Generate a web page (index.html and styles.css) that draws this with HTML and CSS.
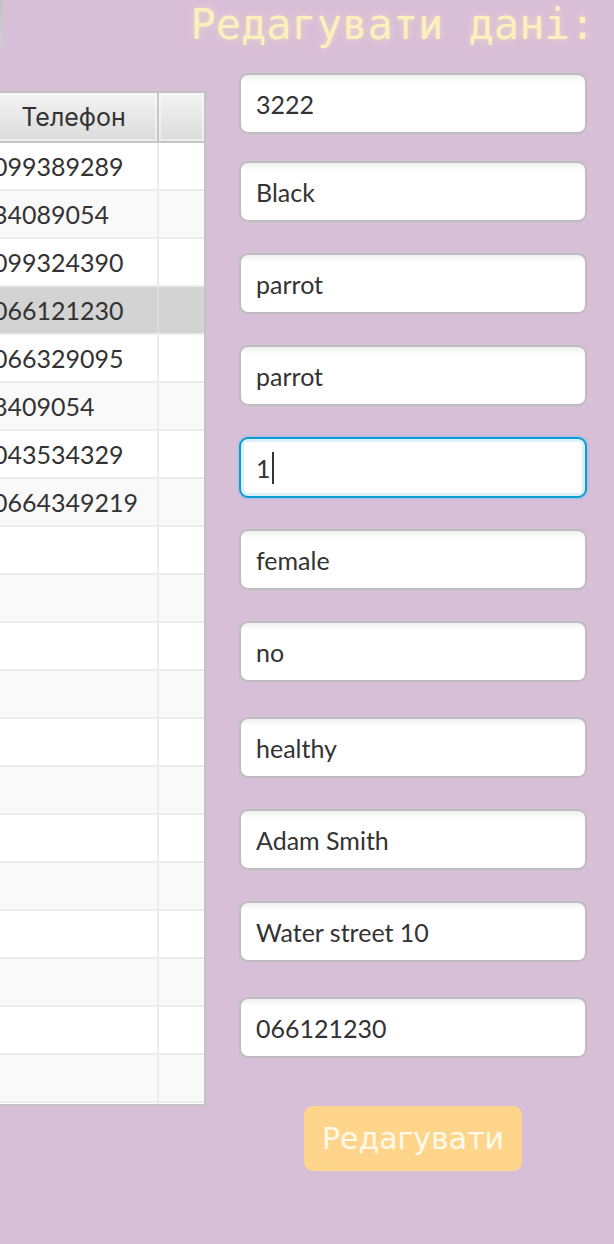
FILE: index.html
```html
<!DOCTYPE html>
<html lang="uk">
<head>
<meta charset="utf-8">
<title>Редагувати дані</title>
<link rel="stylesheet" href="styles.css">
</head>
<body>
<div class="page">
  <div class="topbar">
    <div class="stub"></div>
    <h1 class="title">Редагувати дані:</h1>
  </div>
  <div class="table">
    <div class="thead"><div class="th c1">Телефон</div><div class="th c2"></div></div>
    <div class="row"><div class="td c1">099389289</div><div class="td c2"></div></div>
    <div class="row alt"><div class="td c1">34089054</div><div class="td c2"></div></div>
    <div class="row"><div class="td c1">099324390</div><div class="td c2"></div></div>
    <div class="row sel"><div class="td c1">066121230</div><div class="td c2"></div></div>
    <div class="row"><div class="td c1">066329095</div><div class="td c2"></div></div>
    <div class="row alt"><div class="td c1">8409054</div><div class="td c2"></div></div>
    <div class="row"><div class="td c1">043534329</div><div class="td c2"></div></div>
    <div class="row alt"><div class="td c1">0664349219</div><div class="td c2"></div></div>
    <div class="row"><div class="td c1"></div><div class="td c2"></div></div>
    <div class="row alt"><div class="td c1"></div><div class="td c2"></div></div>
    <div class="row"><div class="td c1"></div><div class="td c2"></div></div>
    <div class="row alt"><div class="td c1"></div><div class="td c2"></div></div>
    <div class="row"><div class="td c1"></div><div class="td c2"></div></div>
    <div class="row alt"><div class="td c1"></div><div class="td c2"></div></div>
    <div class="row"><div class="td c1"></div><div class="td c2"></div></div>
    <div class="row alt"><div class="td c1"></div><div class="td c2"></div></div>
    <div class="row"><div class="td c1"></div><div class="td c2"></div></div>
    <div class="row alt"><div class="td c1"></div><div class="td c2"></div></div>
    <div class="row"><div class="td c1"></div><div class="td c2"></div></div>
    <div class="row alt"><div class="td c1"></div><div class="td c2"></div></div>
    <div class="row"><div class="td c1"></div><div class="td c2"></div></div>
  </div>
  <div class="form">
    <div class="field">3222</div>
    <div class="field tight">Black</div>
    <div class="field">parrot</div>
    <div class="field">parrot</div>
    <div class="field focused">1<span class="caret"></span></div>
    <div class="field">female</div>
    <div class="field">no</div>
    <div class="field loose">healthy</div>
    <div class="field">Adam Smith</div>
    <div class="field">Water street 10</div>
    <div class="field loose">066121230</div>
    <button class="btn" type="button">Редагувати</button>
  </div>
</div>
</body>
</html>
```
FILE: styles.css
```css
html, body {
  margin: 0;
  padding: 0;
}
body {
  background: #d8bfd8;
  width: 614px;
  height: 1244px;
  overflow: hidden;
  font-family: "Lato", "Inter", "Liberation Sans", sans-serif;
  color: #333333;
}
.page {
  display: grid;
  grid-template-columns: 206px 348px;
  column-gap: 33px;
  align-items: start;
}
.topbar {
  grid-column: 1 / span 2;
  margin-right: -27px;
  height: 60px;
  display: flex;
  justify-content: space-between;
  align-items: flex-start;
}
.stub {
  width: 3px;
  height: 46px;
  background: linear-gradient(#c4c4c4, #d0cdd0);
}
.title {
  margin: 0;
  padding-right: 19px;
  font-family: "DejaVu Sans Mono", monospace;
  font-weight: normal;
  font-size: 42px;
  line-height: 49px;
  color: #ffefbe;
  text-shadow: 0 0 6px rgba(255, 236, 180, 0.6);
  white-space: nowrap;
}
.table {
  margin-top: 31px;
  margin-left: -10px;
  height: 1015px;
  box-sizing: border-box;
  border-top: 2px solid #c3c3c3;
  border-right: 2px solid #c3c3c3;
  border-bottom: 2px solid #c3c3c3;
  overflow: hidden;
  background: #ffffff;
  font-size: 25px;
}
.thead, .row {
  display: flex;
}
.thead {
  height: 50px;
  box-sizing: border-box;
  border-bottom: 2px solid #c6c6c6;
}
.th {
  background: linear-gradient(#f3f3f3, #dbdbdb);
  box-shadow: inset 0 0 0 2px rgba(255, 255, 255, 0.45);
  display: flex;
  align-items: center;
  justify-content: center;
  color: #333;
  font-family: "Inter", "Liberation Sans", sans-serif;
  font-size: 25px;
}
.c1 {
  flex: 0 0 169px;
  box-sizing: border-box;
}
.c2 {
  flex: 1;
}
.th.c1 {
  border-right: 2px solid #c6c6c6;
}
.row {
  height: 48px;
  box-sizing: border-box;
  border-bottom: 2px solid #ececec;
  background: #ffffff;
  flex-shrink: 0;
}
.row.alt {
  background: #f9f9f9;
}
.row.sel {
  background: #d3d3d3;
}
.td {
  display: flex;
  align-items: center;
  padding-left: 3px;
  white-space: nowrap;
}
.td.c1 {
  border-right: 2px solid #ececec;
}
.row.sel .td.c1 {
  border-right-color: #dcdcdc;
}
.form {
  margin-top: 13px;
  display: flex;
  flex-direction: column;
  gap: 31px;
}
.field {
  height: 61px;
  box-sizing: border-box;
  border: 2px solid #bdbdbd;
  border-radius: 9px;
  background: linear-gradient(#efefef 0, #ffffff 7px);
  padding-left: 15px;
  display: flex;
  align-items: center;
  font-size: 25px;
  color: #333333;
}
.field.tight {
  margin-top: -4px;
}
.field.loose {
  margin-top: 4px;
}
.field.focused {
  border-color: #049ed5;
  background: #ffffff;
  box-shadow: inset 0 0 0 3px #dcf0fa, 0 0 0 2px rgba(150, 190, 230, 0.35);
}
.caret {
  display: inline-block;
  width: 2px;
  height: 32px;
  background: #333333;
  margin-left: 1px;
}
.btn {
  margin-top: 17px;
  align-self: center;
  width: 218px;
  height: 65px;
  border: none;
  border-radius: 9px;
  background: #ffd58c;
  color: #fffaea;
  font-family: "DejaVu Sans", sans-serif;
  font-size: 30px;
  padding: 0;
}
```
